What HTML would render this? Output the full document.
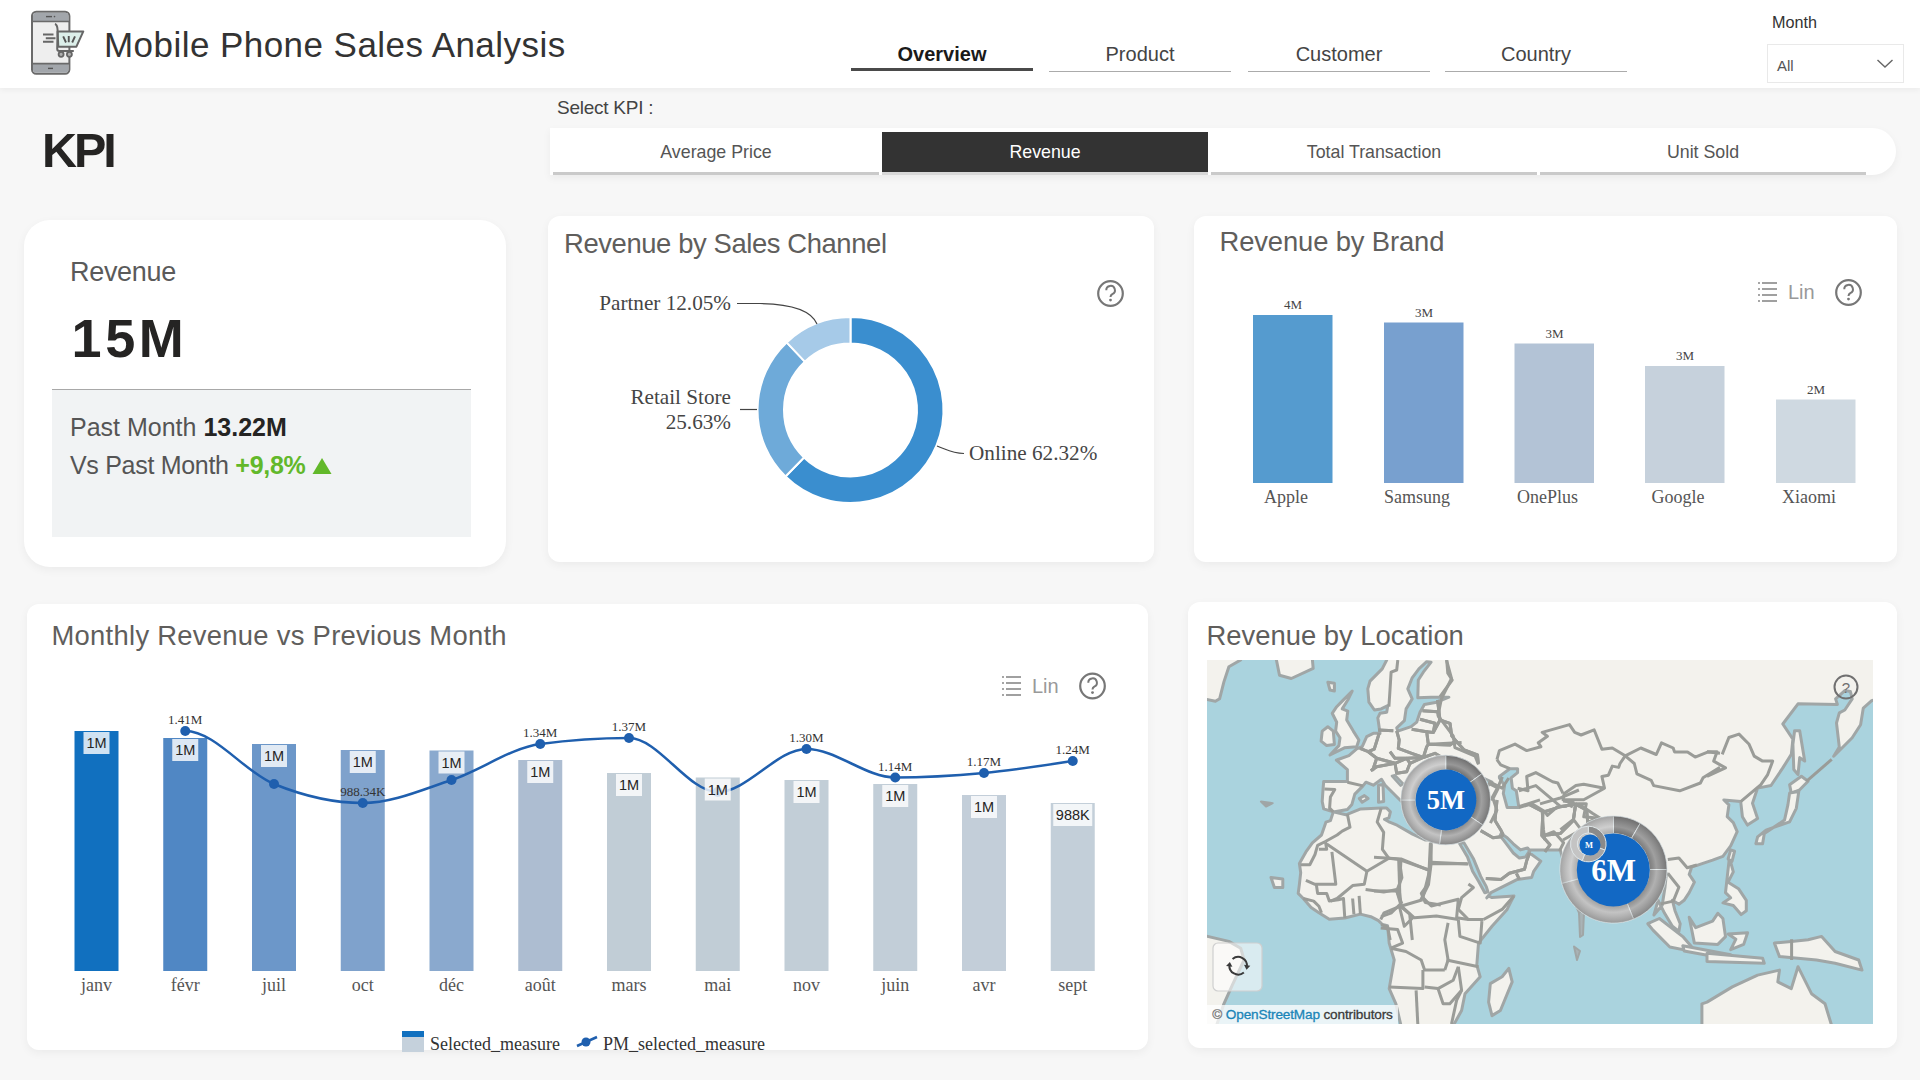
<!DOCTYPE html>
<html><head><meta charset="utf-8">
<style>
*{margin:0;padding:0;box-sizing:border-box}
html,body{width:1920px;height:1080px;overflow:hidden;background:#f7f7f7;font-family:"Liberation Sans",sans-serif;color:#333}
.abs{position:absolute}
#hdr{left:0;top:0;width:1920px;height:88px;background:#fff;box-shadow:0 2px 6px rgba(0,0,0,0.05)}
.title{left:104px;top:25px;font-size:35px;color:#333;letter-spacing:0.45px;white-space:nowrap}
.tab{top:41px;padding-top:2px;width:182px;height:30.5px;text-align:center;font-size:20px;color:#444;border-bottom:1.6px solid #ababab}
.tab.on{font-weight:bold;color:#1a1a1a;border-bottom:3px solid #4a4a4a;height:30px}
.card{background:#fff;box-shadow:0 3px 10px rgba(0,0,0,0.05)}
.ctitle{font-size:27.4px;color:#605e5c;white-space:nowrap}
.serif{font-family:"Liberation Serif",serif}
.kbtn{top:132px;width:326px;height:43px;text-align:center;font-size:17.8px;color:#555;line-height:40px;border-bottom:3px solid #cacaca}
.kbtn.on{background:#333;color:#fff;border-bottom:3px solid #d8d8d8;height:43px}
svg text{font-family:"Liberation Serif",serif}
</style></head><body>
<div id="hdr" class="abs"></div>
<svg class="abs" style="left:0;top:0" width="100" height="87" viewBox="0 0 100 87">
 <rect x="32" y="11.8" width="37.4" height="62" rx="4.2" fill="#eeeeee" stroke="#6a6a6a" stroke-width="2"/>
 <path d="M33 21.3 V16 Q33 12.8 36.2 12.8 H65.2 Q68.4 12.8 68.4 16 V21.3 Z" fill="#a2a6ab"/>
 <path d="M33 63.7 V69.6 Q33 72.8 36.2 72.8 H65.2 Q68.4 72.8 68.4 69.6 V63.7 Z" fill="#a2a6ab"/>
 <line x1="32" y1="21.5" x2="69.4" y2="21.5" stroke="#6a6a6a" stroke-width="1.6"/>
 <line x1="32" y1="63.6" x2="69.4" y2="63.6" stroke="#6a6a6a" stroke-width="1.6"/>
 <line x1="46" y1="16.6" x2="52" y2="16.6" stroke="#555" stroke-width="1.4"/><circle cx="54.5" cy="16.6" r="0.8" fill="#555"/>
 <line x1="48" y1="68.4" x2="53" y2="68.4" stroke="#555" stroke-width="1.4"/>
 <path d="M43 34.5 H53.5 M45.8 38.3 H55.5 M43 41.8 H53.5" stroke="#666" stroke-width="1.9"/>
 <path d="M57.6 31.4 L83.3 31.4 L76.4 46.7 L58.3 46.7 Z" fill="#dcefea" stroke="#666" stroke-width="2" stroke-linejoin="round"/>
 <path d="M54.9 24 Q57.3 24.5 57.6 30 L57.2 48.8 Q57.2 51 59.4 51 L73.8 51" fill="none" stroke="#666" stroke-width="2"/>
 <path d="M63.2 36.3 L66 42.5 M68.75 36 L68.75 42.2 M75 36.3 L72.2 42.5" stroke="#555" stroke-width="1.9"/>
 <circle cx="61.1" cy="54.3" r="2.5" fill="#b0b0b0" stroke="#666" stroke-width="1.8"/>
 <circle cx="69.4" cy="54.3" r="2.5" fill="#b0b0b0" stroke="#666" stroke-width="1.8"/>
</svg>
<div class="abs title">Mobile Phone Sales Analysis</div>
<div class="abs tab on" style="left:851px">Overview</div>
<div class="abs tab" style="left:1049px">Product</div>
<div class="abs tab" style="left:1248px">Customer</div>
<div class="abs tab" style="left:1445px">Country</div>
<div class="abs" style="left:1772px;top:13px;font-size:16.2px;color:#333">Month</div>
<div class="abs" style="left:1767px;top:44px;width:137px;height:39px;border:1.5px solid #e9e9e9;background:#fff"></div>
<div class="abs" style="left:1777px;top:57px;font-size:15px;color:#555">All</div>
<svg class="abs" style="left:1874px;top:55px" width="22" height="16"><path d="M3.5 5 L11 12 L18.5 5" fill="none" stroke="#666" stroke-width="1.4"/></svg>

<div class="abs" style="left:42px;top:121.5px;font-size:48.5px;font-weight:bold;color:#252423;letter-spacing:-3px">KPI</div>
<div class="abs" style="left:557px;top:97px;font-size:19px;color:#444;letter-spacing:-0.25px">Select KPI :</div>
<div class="abs" style="left:550px;top:128px;width:1346px;height:47px;background:#fff;border-radius:0 24px 24px 0;box-shadow:0 3px 8px rgba(0,0,0,0.05)"></div>
<div class="abs kbtn" style="left:553px">Average Price</div>
<div class="abs kbtn on" style="left:882px">Revenue</div>
<div class="abs kbtn" style="left:1211px">Total Transaction</div>
<div class="abs kbtn" style="left:1540px">Unit Sold</div>

<div class="abs card" style="left:24px;top:220px;width:482px;height:347px;border-radius:26px"></div>
<div class="abs" style="left:70px;top:257px;font-size:27px;color:#5a5a5a;letter-spacing:-0.3px">Revenue</div>
<div class="abs" style="left:71.5px;top:307px;font-size:54px;font-weight:bold;color:#252423;letter-spacing:3.6px">15M</div>
<div class="abs" style="left:52px;top:389px;width:419px;height:148px;background:#f1f3f4;border-top:1.5px solid #a8a8a8"></div>
<div class="abs" style="left:70px;top:413px;font-size:25px;color:#555;white-space:nowrap">Past Month <b style="color:#252423">13.22M</b></div>
<div class="abs" style="left:70px;top:451px;font-size:25px;color:#555;white-space:nowrap;letter-spacing:-0.3px">Vs Past Month <b style="color:#62b82a;letter-spacing:-0.3px">+9,8%</b> <svg width="20" height="18" style="vertical-align:-1px"><path d="M10 1 L19.5 17 L0.5 17 Z" fill="#62b82a"/></svg></div>
<div class="abs card" style="left:548px;top:216px;width:606px;height:346px;border-radius:12px"></div>
<div class="abs ctitle" style="left:564px;top:227.5px;letter-spacing:-0.39px">Revenue by Sales Channel</div>
<svg class="abs" style="left:0;top:0" width="1920" height="600" viewBox="0 0 1920 600">
<path d="M850.50 317.00 A93 93 0 1 1 785.49 476.50 L804.01 457.55 A66.5 66.5 0 1 0 850.50 343.50 Z" fill="#3a8ecf" stroke="#fff" stroke-width="2"/>
<path d="M785.49 476.50 A93 93 0 0 1 786.62 342.41 L804.83 361.67 A66.5 66.5 0 0 0 804.01 457.55 Z" fill="#6eaad9" stroke="#fff" stroke-width="2"/>
<path d="M786.62 342.41 A93 93 0 0 1 850.50 317.00 L850.50 343.50 A66.5 66.5 0 0 0 804.83 361.67 Z" fill="#a6cae8" stroke="#fff" stroke-width="2"/>
<path d="M737 303.5 L760 303.5 C795 304 812 312 817 324" fill="none" stroke="#444" stroke-width="1.2"/>
<path d="M740 409.5 L757 409.5" fill="none" stroke="#444" stroke-width="1.2"/>
<path d="M937 446 C948 450 952 453 964 453.5" fill="none" stroke="#444" stroke-width="1.2"/>
<text x="731" y="310" font-size="21.2" fill="#454545" text-anchor="end">Partner 12.05%</text>
<text x="731" y="404" font-size="21.2" fill="#454545" text-anchor="end">Retail Store</text>
<text x="731" y="429" font-size="21.2" fill="#454545" text-anchor="end">25.63%</text>
<text x="969" y="460" font-size="21.2" fill="#454545">Online 62.32%</text>
<circle cx="1110.5" cy="293.5" r="12.3" fill="none" stroke="#777" stroke-width="2.2"/><path d="M1106.3 290.3 A4.3 4.3 0 1 1 1112.3 294.1 Q1110.5 295.1 1110.5 297.1" fill="none" stroke="#777" stroke-width="2"/><circle cx="1110.5" cy="300.1" r="1.4" fill="#777"/>
</svg>
<div class="abs card" style="left:1194px;top:216px;width:703px;height:346px;border-radius:12px"></div>
<div class="abs ctitle" style="left:1219.5px;top:226px;letter-spacing:-0.13px">Revenue by Brand</div>
<svg class="abs" style="left:1180px;top:200px" width="740" height="380" viewBox="1180 200 740 380">
<rect x="1253" y="315" width="79.5" height="168" fill="#559bcf"/>
<text x="1293" y="308.5" font-size="13" fill="#444" text-anchor="middle">4M</text>
<text x="1286" y="503" font-size="18" fill="#555" text-anchor="middle">Apple</text>
<rect x="1384" y="322.5" width="79.5" height="160.5" fill="#78a0cf"/>
<text x="1424" y="316.5" font-size="13" fill="#444" text-anchor="middle">3M</text>
<text x="1417" y="503" font-size="18" fill="#555" text-anchor="middle">Samsung</text>
<rect x="1514.5" y="343.5" width="79.5" height="139.5" fill="#b3c3d6"/>
<text x="1554.5" y="337.5" font-size="13" fill="#444" text-anchor="middle">3M</text>
<text x="1547.5" y="503" font-size="18" fill="#555" text-anchor="middle">OnePlus</text>
<rect x="1645" y="366" width="79.5" height="117" fill="#c6d1dc"/>
<text x="1685" y="359.5" font-size="13" fill="#444" text-anchor="middle">3M</text>
<text x="1678" y="503" font-size="18" fill="#555" text-anchor="middle">Google</text>
<rect x="1776" y="399.5" width="79.5" height="83.5" fill="#cfd9e1"/>
<text x="1816" y="393.5" font-size="13" fill="#444" text-anchor="middle">2M</text>
<text x="1809" y="503" font-size="18" fill="#555" text-anchor="middle">Xiaomi</text>
<g stroke="#888" stroke-width="1.6">
<line x1="1758" y1="283" x2="1760" y2="283"/><line x1="1762" y1="283" x2="1777" y2="283"/>
<line x1="1758" y1="289" x2="1760" y2="289"/><line x1="1762" y1="289" x2="1777" y2="289"/>
<line x1="1758" y1="295" x2="1760" y2="295"/><line x1="1762" y1="295" x2="1777" y2="295"/>
<line x1="1758" y1="301" x2="1760" y2="301"/><line x1="1762" y1="301" x2="1777" y2="301"/>
</g>
<text x="1788" y="299" font-size="20" fill="#999" style="font-family:Liberation Sans">Lin</text>
<circle cx="1848.5" cy="292.5" r="12.3" fill="none" stroke="#777" stroke-width="2.2"/><path d="M1844.3 289.3 A4.3 4.3 0 1 1 1850.3 293.1 Q1848.5 294.1 1848.5 296.1" fill="none" stroke="#777" stroke-width="2"/><circle cx="1848.5" cy="299.1" r="1.4" fill="#777"/>
</svg>
<div class="abs card" style="left:27px;top:604px;width:1121px;height:446px;border-radius:12px"></div>
<div class="abs ctitle" style="left:51.5px;top:620px;letter-spacing:0.28px">Monthly Revenue vs Previous Month</div>
<svg class="abs" style="left:0;top:580px" width="1170" height="500" viewBox="0 580 1170 500">
<rect x="74.50" y="731" width="44" height="240" fill="#1170bf"/>
<text x="96.50" y="991" font-size="18" fill="#555" text-anchor="middle">janv</text>
<rect x="163.25" y="738" width="44" height="233" fill="#5087c4"/>
<text x="185.25" y="991" font-size="18" fill="#555" text-anchor="middle">févr</text>
<rect x="252.00" y="744" width="44" height="227" fill="#6c97c9"/>
<text x="274.00" y="991" font-size="18" fill="#555" text-anchor="middle">juil</text>
<rect x="340.75" y="750" width="44" height="221" fill="#7fa2cc"/>
<text x="362.75" y="991" font-size="18" fill="#555" text-anchor="middle">oct</text>
<rect x="429.50" y="750.5" width="44" height="220.5" fill="#8aa9ce"/>
<text x="451.50" y="991" font-size="18" fill="#555" text-anchor="middle">déc</text>
<rect x="518.25" y="760" width="44" height="211" fill="#adbdd1"/>
<text x="540.25" y="991" font-size="18" fill="#555" text-anchor="middle">août</text>
<rect x="607.00" y="773" width="44" height="198" fill="#c1cdd6"/>
<text x="629.00" y="991" font-size="18" fill="#555" text-anchor="middle">mars</text>
<rect x="695.75" y="777.5" width="44" height="193.5" fill="#c1cdd6"/>
<text x="717.75" y="991" font-size="18" fill="#555" text-anchor="middle">mai</text>
<rect x="784.50" y="780" width="44" height="191" fill="#c2ced7"/>
<text x="806.50" y="991" font-size="18" fill="#555" text-anchor="middle">nov</text>
<rect x="873.25" y="784" width="44" height="187" fill="#c2ced8"/>
<text x="895.25" y="991" font-size="18" fill="#555" text-anchor="middle">juin</text>
<rect x="962.00" y="795" width="44" height="176" fill="#c3ced9"/>
<text x="984.00" y="991" font-size="18" fill="#555" text-anchor="middle">avr</text>
<rect x="1050.75" y="803" width="44" height="168" fill="#c3cfd9"/>
<text x="1072.75" y="991" font-size="18" fill="#555" text-anchor="middle">sept</text>
<path d="M185.25 731.00 C214.83 731.00 244.42 772.00 274.00 784.00 C303.58 796.00 333.17 803.00 362.75 803.00 C392.33 803.00 421.92 789.83 451.50 780.00 C481.08 770.17 510.67 748.00 540.25 744.00 C569.83 740.00 599.42 738.00 629.00 738.00 C658.58 738.00 688.17 792.00 717.75 792.00 C747.33 792.00 776.92 749.00 806.50 749.00 C836.08 749.00 865.67 777.50 895.25 777.50 C924.83 777.50 954.42 775.75 984.00 773.00 C1013.58 770.25 1043.17 765.62 1072.75 761.00" fill="none" stroke="#1f5fae" stroke-width="2.5"/>
<circle cx="185.25" cy="731" r="5" fill="#1f5fae"/>
<circle cx="274.00" cy="784" r="5" fill="#1f5fae"/>
<circle cx="362.75" cy="803" r="5" fill="#1f5fae"/>
<circle cx="451.50" cy="780" r="5" fill="#1f5fae"/>
<circle cx="540.25" cy="744" r="5" fill="#1f5fae"/>
<circle cx="629.00" cy="738" r="5" fill="#1f5fae"/>
<circle cx="717.75" cy="792" r="5" fill="#1f5fae"/>
<circle cx="806.50" cy="749" r="5" fill="#1f5fae"/>
<circle cx="895.25" cy="777.5" r="5" fill="#1f5fae"/>
<circle cx="984.00" cy="773" r="5" fill="#1f5fae"/>
<circle cx="1072.75" cy="761" r="5" fill="#1f5fae"/>
<rect x="83.50" y="732" width="26" height="22" fill="#fff" fill-opacity="0.8"/>
<text x="96.50" y="748.2" font-size="14.5" fill="#252423" text-anchor="middle" style="font-family:Liberation Sans">1M</text>
<rect x="172.25" y="739" width="26" height="22" fill="#fff" fill-opacity="0.8"/>
<text x="185.25" y="755.2" font-size="14.5" fill="#252423" text-anchor="middle" style="font-family:Liberation Sans">1M</text>
<rect x="261.00" y="745" width="26" height="22" fill="#fff" fill-opacity="0.8"/>
<text x="274.00" y="761.2" font-size="14.5" fill="#252423" text-anchor="middle" style="font-family:Liberation Sans">1M</text>
<rect x="349.75" y="751" width="26" height="22" fill="#fff" fill-opacity="0.8"/>
<text x="362.75" y="767.2" font-size="14.5" fill="#252423" text-anchor="middle" style="font-family:Liberation Sans">1M</text>
<rect x="438.50" y="751.5" width="26" height="22" fill="#fff" fill-opacity="0.8"/>
<text x="451.50" y="767.7" font-size="14.5" fill="#252423" text-anchor="middle" style="font-family:Liberation Sans">1M</text>
<rect x="527.25" y="761" width="26" height="22" fill="#fff" fill-opacity="0.8"/>
<text x="540.25" y="777.2" font-size="14.5" fill="#252423" text-anchor="middle" style="font-family:Liberation Sans">1M</text>
<rect x="616.00" y="774" width="26" height="22" fill="#fff" fill-opacity="0.8"/>
<text x="629.00" y="790.2" font-size="14.5" fill="#252423" text-anchor="middle" style="font-family:Liberation Sans">1M</text>
<rect x="704.75" y="778.5" width="26" height="22" fill="#fff" fill-opacity="0.8"/>
<text x="717.75" y="794.7" font-size="14.5" fill="#252423" text-anchor="middle" style="font-family:Liberation Sans">1M</text>
<rect x="793.50" y="781" width="26" height="22" fill="#fff" fill-opacity="0.8"/>
<text x="806.50" y="797.2" font-size="14.5" fill="#252423" text-anchor="middle" style="font-family:Liberation Sans">1M</text>
<rect x="882.25" y="785" width="26" height="22" fill="#fff" fill-opacity="0.8"/>
<text x="895.25" y="801.2" font-size="14.5" fill="#252423" text-anchor="middle" style="font-family:Liberation Sans">1M</text>
<rect x="971.00" y="796" width="26" height="22" fill="#fff" fill-opacity="0.8"/>
<text x="984.00" y="812.2" font-size="14.5" fill="#252423" text-anchor="middle" style="font-family:Liberation Sans">1M</text>
<rect x="1053.25" y="804" width="39" height="22" fill="#fff" fill-opacity="0.8"/>
<text x="1072.75" y="820.2" font-size="14.5" fill="#252423" text-anchor="middle" style="font-family:Liberation Sans">988K</text>
<text x="185.25" y="724" font-size="13" fill="#333" text-anchor="middle">1.41M</text>
<text x="362.75" y="796" font-size="13" fill="#333" text-anchor="middle">988.34K</text>
<text x="540.25" y="737" font-size="13" fill="#333" text-anchor="middle">1.34M</text>
<text x="629.00" y="731" font-size="13" fill="#333" text-anchor="middle">1.37M</text>
<text x="806.50" y="742" font-size="13" fill="#333" text-anchor="middle">1.30M</text>
<text x="895.25" y="770.5" font-size="13" fill="#333" text-anchor="middle">1.14M</text>
<text x="984.00" y="766" font-size="13" fill="#333" text-anchor="middle">1.17M</text>
<text x="1072.75" y="754" font-size="13" fill="#333" text-anchor="middle">1.24M</text>
<g stroke="#888" stroke-width="1.6">
<line x1="1002" y1="677" x2="1004" y2="677"/><line x1="1006" y1="677" x2="1021" y2="677"/>
<line x1="1002" y1="683" x2="1004" y2="683"/><line x1="1006" y1="683" x2="1021" y2="683"/>
<line x1="1002" y1="689" x2="1004" y2="689"/><line x1="1006" y1="689" x2="1021" y2="689"/>
<line x1="1002" y1="695" x2="1004" y2="695"/><line x1="1006" y1="695" x2="1021" y2="695"/>
</g>
<text x="1032" y="693" font-size="20" fill="#999" style="font-family:Liberation Sans">Lin</text>
<circle cx="1092.5" cy="686" r="12.3" fill="none" stroke="#777" stroke-width="2.2"/><path d="M1088.3 682.8 A4.3 4.3 0 1 1 1094.3 686.6 Q1092.5 687.6 1092.5 689.6" fill="none" stroke="#777" stroke-width="2"/><circle cx="1092.5" cy="692.6" r="1.4" fill="#777"/>
<rect x="402" y="1031" width="22" height="21" fill="#c5d1dc"/><rect x="402" y="1031" width="22" height="6" fill="#1170bf"/>
<text x="430" y="1050" font-size="18" fill="#333">Selected_measure</text>
<path d="M577 1046 L597 1037" stroke="#1f5fae" stroke-width="2.5"/><circle cx="586" cy="1042" r="4.5" fill="#1f5fae"/>
<text x="603" y="1050" font-size="18" fill="#333">PM_selected_measure</text>
</svg>
<div class="abs card" style="left:1188px;top:602px;width:709px;height:446px;border-radius:12px"></div>
<div class="abs ctitle" style="left:1206.5px;top:619.5px">Revenue by Location</div>
<svg class="abs" style="left:1207px;top:660px" width="666" height="364" viewBox="1207 660 666 364">
<defs><radialGradient id="rg" cx="0.5" cy="0.5" r="0.5"><stop offset="0.68" stop-color="#000" stop-opacity="0.12"/><stop offset="0.8" stop-color="#fff" stop-opacity="0.15"/><stop offset="1" stop-color="#000" stop-opacity="0.18"/></radialGradient></defs>
<rect x="1207" y="660" width="666" height="364" fill="#aad3de"/>
<path d="M1386.7 660.0 L1382.2 668.9 L1370.0 681.1 L1367.8 688.9 L1368.9 702.2 L1374.4 710.0 L1381.1 708.9 L1387.8 705.6 L1386.7 712.2 L1380.0 713.3 L1377.8 717.8 L1380.0 733.3 L1373.3 733.3 L1366.7 736.7 L1362.2 746.7 L1356.7 748.9 L1348.9 755.6 L1336.7 760.0 L1336.3 760.0 L1347.4 769.6 L1347.4 781.5 L1323.7 781.5 L1323.0 789.6 L1322.2 801.5 L1323.7 808.9 L1333.3 811.9 L1330.4 820.7 L1325.9 822.2 L1321.5 835.0 L1312.4 842.8 L1305.9 851.9 L1299.4 863.5 L1300.7 872.6 L1299.4 884.3 L1298.2 893.4 L1303.3 898.5 L1311.1 907.6 L1318.9 912.8 L1329.3 919.3 L1344.8 918.0 L1360.4 914.1 L1370.8 916.7 L1378.5 920.6 L1382.4 924.5 L1387.6 925.8 L1389.2 943.1 L1394.2 960.0 L1389.2 988.6 L1395.9 1003.8 L1401.0 1025.7 L1453.2 1025.7 L1461.6 1010.5 L1465.0 993.7 L1480.2 976.8 L1476.8 965.0 L1478.5 943.1 L1492.0 926.3 L1507.1 909.4 L1513.9 895.9 L1492.0 897.6 L1488.6 895.9 L1486.8 897.8 L1490.9 892.7 L1517.4 879.4 L1531.7 877.4 L1533.7 871.3 L1540.8 861.1 L1529.6 853.0 L1529.6 849.9 L1560.2 849.9 L1566.0 870.0 L1574.0 900.0 L1580.0 914.0 L1595.0 912.0 L1620.0 895.0 L1660.0 868.0 L1666.4 873.3 L1665.0 887.2 L1662.2 905.3 L1653.9 915.0 L1658.1 900.3 L1664.6 913.3 L1672.4 926.3 L1678.9 931.4 L1680.2 923.7 L1675.0 910.7 L1672.4 900.3 L1678.9 904.2 L1684.1 900.3 L1689.2 892.6 L1694.4 882.2 L1689.2 874.4 L1691.8 866.7 L1697.0 865.4 L1712.6 860.2 L1722.9 856.3 L1730.7 845.9 L1737.2 831.7 L1733.3 822.6 L1727.2 816.7 L1728.9 804.9 L1723.9 799.9 L1740.7 801.6 L1742.4 816.7 L1747.4 825.1 L1757.6 818.4 L1752.5 803.2 L1757.6 788.1 L1771.0 785.5 L1782.8 767.9 L1791.3 754.4 L1792.9 739.2 L1782.8 724.0 L1798.0 703.8 L1837.4 704.4 L1835.6 698.9 L1844.8 690.6 L1850.4 691.5 L1852.2 698.9 L1844.8 710.0 L1839.3 712.8 L1836.5 723.0 L1839.3 747.0 L1833.7 756.3 L1852.2 737.8 L1860.6 724.8 L1863.3 708.1 L1871.7 700.7 L1880.0 698.0 L1880.0 650.0 L1386.7 650.0 Z" fill="#f3f2ed" stroke="#a0a6a6" stroke-width="3" stroke-linejoin="round"/>
<path d="M1333.3 811.9 L1345.9 814.8 L1360.7 808.9 L1381.5 808.1 L1386.7 808.1 L1390.4 811.9 L1388.9 817.8 L1384.4 819.3 L1389.6 822.2 L1397.0 825.2 L1412.6 834.1 L1425.0 840.0 L1440.0 840.0 L1440.0 790.0 L1401.5 801.5 L1385.2 785.2 L1381.5 779.3 L1373.3 785.2 L1365.9 782.2 L1363.0 785.9 L1354.8 794.1 L1351.9 804.4 L1347.4 809.6 Z" fill="#aad3de" stroke="#a0a6a6" stroke-width="3" stroke-linejoin="round"/>
<path d="M1440.0 778.0 L1470.0 772.0 L1492.0 782.0 L1478.0 795.0 L1450.0 793.0 Z" fill="#aad3de" stroke="#a0a6a6" stroke-width="3" stroke-linejoin="round"/>
<path d="M1391.9 775.9 L1394.8 775.2 L1403.0 783.7 L1400.7 785.6 Z" fill="#aad3de" stroke="#a0a6a6" stroke-width="2.5" stroke-linejoin="round"/>
<path d="M1396.7 727.8 L1404.4 720.6 L1406.1 708.9 L1412.2 698.9 L1407.8 688.9 L1412.2 677.8 L1418.9 668.9 L1426.7 661.7 L1431.1 662.2 L1423.3 672.2 L1418.3 680.0 L1417.8 697.8 L1431.1 697.2 L1448.9 697.2 L1436.7 702.2 L1424.4 704.4 L1420.0 712.2 L1416.7 722.2 L1411.1 726.7 L1397.8 731.1 Z" fill="#aad3de" stroke="#a0a6a6" stroke-width="3" stroke-linejoin="round"/>
<path d="M1499.4 776.5 L1509.8 768.7 L1517.6 768.7 L1517.6 772.6 L1511.1 777.8 L1512.4 788.2 L1516.3 790.8 L1518.9 807.6 L1507.2 807.6 L1503.3 793.4 L1504.6 785.6 L1499.4 777.8 Z" fill="#aad3de" stroke="#a0a6a6" stroke-width="3" stroke-linejoin="round"/>
<path d="M1501.1 833.6 L1507.2 837.7 L1513.3 843.8 L1520.5 849.9 L1527.6 847.9 L1529.6 850.9 L1525.5 857.0 L1519.4 858.1 L1513.3 853.0 L1507.2 844.8 L1500.1 835.6 Z" fill="#aad3de" stroke="#a0a6a6" stroke-width="3" stroke-linejoin="round"/>
<path d="M1459.4 843.3 L1463.9 842.8 L1473.6 859.1 L1480.7 876.4 L1486.3 886.6 L1487.9 891.7 L1484.8 892.7 L1478.7 881.5 L1472.6 871.3 L1467.5 857.0 Z" fill="#aad3de" stroke="#a0a6a6" stroke-width="3" stroke-linejoin="round"/>
<path d="M1207.0 650.0 L1240.7 650.0 L1240.7 660.0 L1228.9 666.7 L1223.9 681.9 L1219.6 698.8 L1215.4 701.3 L1200.0 698.0 Z" fill="#f3f2ed" stroke="#a0a6a6" stroke-width="3" stroke-linejoin="round"/>
<path d="M1274.4 650.0 L1311.5 650.0 L1313.2 668.4 L1291.3 678.5 L1279.5 675.2 Z" fill="#f3f2ed" stroke="#a0a6a6" stroke-width="3" stroke-linejoin="round"/>
<path d="M1327.8 682.2 L1334.4 683.3 L1334.4 691.1 L1330.0 690.0 Z" fill="#f3f2ed" stroke="#a0a6a6" stroke-width="3" stroke-linejoin="round"/>
<path d="M1352.2 691.1 L1347.8 700.0 L1342.2 708.9 L1347.8 711.1 L1346.7 720.0 L1353.3 731.1 L1358.9 740.0 L1356.7 746.7 L1344.4 747.8 L1330.0 755.0 L1338.9 745.6 L1340.0 737.8 L1335.6 731.1 L1336.7 722.2 L1332.2 713.3 L1336.7 706.7 L1342.2 701.1 Z" fill="#f3f2ed" stroke="#a0a6a6" stroke-width="3" stroke-linejoin="round"/>
<path d="M1322.2 731.1 L1327.8 726.7 L1333.3 731.1 L1334.4 744.4 L1326.7 745.6 L1321.1 741.1 Z" fill="#f3f2ed" stroke="#a0a6a6" stroke-width="3" stroke-linejoin="round"/>
<path d="M1508.8 968.4 L1512.2 981.9 L1500.4 1010.5 L1492.0 1015.6 L1488.6 1002.1 L1490.3 983.6 L1502.1 976.8 Z" fill="#f3f2ed" stroke="#a0a6a6" stroke-width="3" stroke-linejoin="round"/>
<path d="M1200.0 934.7 L1228.9 941.4 L1240.7 948.2 L1244.1 960.0 L1232.3 985.2 L1223.9 1003.8 L1215.0 1030.0 L1200.0 1030.0 Z" fill="#f3f2ed" stroke="#a0a6a6" stroke-width="3" stroke-linejoin="round"/>
<path d="M1271.0 877.4 L1282.8 879.1 L1282.8 887.5 L1274.4 887.5 Z" fill="#f3f2ed" stroke="#a0a6a6" stroke-width="3" stroke-linejoin="round"/>
<path d="M1647.8 923.7 L1659.4 918.5 L1682.8 936.6 L1691.8 947.0 L1689.2 950.9 L1669.8 947.0 L1653.0 930.1 Z" fill="#f3f2ed" stroke="#a0a6a6" stroke-width="3" stroke-linejoin="round"/>
<path d="M1682.8 945.7 L1730.7 954.8 L1733.3 960.0 L1684.1 950.9 Z" fill="#f3f2ed" stroke="#a0a6a6" stroke-width="3" stroke-linejoin="round"/>
<path d="M1707.0 953.2 L1762.6 958.3 L1764.3 963.3 L1707.0 961.6 Z" fill="#f3f2ed" stroke="#a0a6a6" stroke-width="3" stroke-linejoin="round"/>
<path d="M1689.2 917.2 L1695.7 927.6 L1712.6 921.1 L1717.8 913.3 L1722.9 918.5 L1725.5 936.6 L1717.8 944.4 L1694.4 943.1 Z" fill="#f3f2ed" stroke="#a0a6a6" stroke-width="3" stroke-linejoin="round"/>
<path d="M1729.4 857.6 L1733.3 871.8 L1728.1 882.2 L1738.5 888.7 L1746.3 900.3 L1746.3 910.7 L1741.1 914.6 L1733.3 905.5 L1722.9 902.9 L1730.7 897.8 L1725.5 892.6 Z" fill="#f3f2ed" stroke="#a0a6a6" stroke-width="3" stroke-linejoin="round"/>
<path d="M1730.7 849.8 L1734.6 851.1 L1732.0 861.5 L1728.1 858.9 Z" fill="#f3f2ed" stroke="#a0a6a6" stroke-width="3" stroke-linejoin="round"/>
<path d="M1728.1 934.0 L1747.6 932.7 L1743.7 944.4 L1730.7 949.6 L1735.9 939.2 Z" fill="#f3f2ed" stroke="#a0a6a6" stroke-width="3" stroke-linejoin="round"/>
<path d="M1808.1 939.7 L1821.6 936.4 L1835.1 951.5 L1858.7 960.0 L1862.0 970.1 L1835.1 963.3 L1816.5 960.0 L1798.0 958.3 L1779.5 956.6 L1774.4 943.1 L1791.3 941.4 Z" fill="#f3f2ed" stroke="#a0a6a6" stroke-width="3" stroke-linejoin="round"/>
<path d="M1701.9 1003.8 L1707.0 1002.1 L1732.3 986.9 L1757.6 975.1 L1779.5 970.1 L1777.8 981.9 L1791.3 988.6 L1798.0 966.7 L1811.5 993.7 L1825.0 1003.8 L1831.7 1025.7 L1701.9 1025.7 Z" fill="#f3f2ed" stroke="#a0a6a6" stroke-width="3" stroke-linejoin="round"/>
<path d="M1789.6 784.7 L1801.4 776.3 L1808.1 781.3 L1799.7 789.8 L1791.3 793.1 Z" fill="#f3f2ed" stroke="#a0a6a6" stroke-width="3" stroke-linejoin="round"/>
<path d="M1798.8 791.4 L1796.3 808.3 L1789.6 821.8 L1766.0 830.2 L1757.6 836.9 L1755.9 843.7 L1762.6 843.7 L1764.3 833.6 L1784.5 820.1 L1787.9 804.9 L1789.6 793.1 Z" fill="#f3f2ed" stroke="#a0a6a6" stroke-width="3" stroke-linejoin="round"/>
<path d="M1794.6 730.8 L1799.7 730.8 L1804.7 761.1 L1799.7 757.7 L1798.0 774.6 L1793.8 769.5 L1792.9 744.3 Z" fill="#f3f2ed" stroke="#a0a6a6" stroke-width="3" stroke-linejoin="round"/>
<path d="M1378.5 785.2 L1383.0 784.4 L1383.7 801.5 L1378.5 802.2 Z" fill="#f3f2ed" stroke="#a0a6a6" stroke-width="3" stroke-linejoin="round"/>
<path d="M1359.3 798.5 L1364.4 795.6 L1368.1 798.5 L1362.2 802.2 Z" fill="#f3f2ed" stroke="#a0a6a6" stroke-width="3" stroke-linejoin="round"/>
<path d="M1806.4 781.3 L1831.7 759.4" fill="none" stroke="#9a9c98" stroke-width="3" stroke-linejoin="round"/>
<path d="M1260.9 801.6 L1272.7 803.2 L1266.0 806.6 Z" fill="#9fa5a7" stroke="#a0a6a6" stroke-width="2" stroke-linejoin="round"/>
<path d="M1579.0 912.0 L1584.0 912.0 L1583.0 935.0 L1580.0 937.0 Z" fill="#a9b3b6" stroke="#a0a6a6" stroke-width="2" stroke-linejoin="round"/>
<path d="M1574.0 946.5 L1580.0 951.0 L1577.0 960.0 Z" fill="#a9b3b6" stroke="#a0a6a6" stroke-width="2" stroke-linejoin="round"/>
<path d="M1397.8 660.0 L1396.7 670.0 L1391.1 672.2 L1390.0 690.0 L1388.9 706.7" fill="none" stroke="#9a9c98" stroke-width="3" stroke-linejoin="round"/>
<path d="M1446.7 660.0 L1447.8 673.3 L1452.2 680.0 L1440.0 696.7" fill="none" stroke="#9a9c98" stroke-width="3" stroke-linejoin="round"/>
<path d="M1347.4 782.2 L1363.0 785.9" fill="none" stroke="#9a9c98" stroke-width="3" stroke-linejoin="round"/>
<path d="M1324.4 788.9 L1334.8 789.6 L1330.4 797.0 L1329.6 808.1 L1333.3 811.9" fill="none" stroke="#9a9c98" stroke-width="3" stroke-linejoin="round"/>
<path d="M1431.1 844.3 L1431.1 863.7 L1467.4 863.7" fill="none" stroke="#9a9c98" stroke-width="3" stroke-linejoin="round"/>
<path d="M1431.1 863.7 L1428.5 884.5 L1420.8 900.0" fill="none" stroke="#9a9c98" stroke-width="3" stroke-linejoin="round"/>
<path d="M1398.7 859.8 L1400.0 900.0" fill="none" stroke="#9a9c98" stroke-width="3" stroke-linejoin="round"/>
<path d="M1374.0 857.2 L1401.0 858.9 L1429.6 870.6 L1431.3 842.0" fill="none" stroke="#9a9c98" stroke-width="3" stroke-linejoin="round"/>
<path d="M1431.3 862.2 L1468.4 863.9" fill="none" stroke="#9a9c98" stroke-width="3" stroke-linejoin="round"/>
<path d="M1401.0 858.9 L1399.3 890.9 L1374.0 890.9" fill="none" stroke="#9a9c98" stroke-width="3" stroke-linejoin="round"/>
<path d="M1429.6 870.6 L1422.9 897.6 L1431.3 906.0 L1458.3 899.3 L1456.6 917.8 L1468.4 919.5" fill="none" stroke="#9a9c98" stroke-width="3" stroke-linejoin="round"/>
<path d="M1399.3 890.9 L1401.0 906.0 L1384.1 912.8 L1380.7 919.5" fill="none" stroke="#9a9c98" stroke-width="3" stroke-linejoin="round"/>
<path d="M1401.0 906.0 L1414.4 917.8 L1436.4 916.1 L1458.3 919.5" fill="none" stroke="#9a9c98" stroke-width="3" stroke-linejoin="round"/>
<path d="M1468.4 884.1 L1473.4 887.5 L1461.6 897.6 L1458.3 909.4 L1468.4 919.5 L1483.5 919.5" fill="none" stroke="#9a9c98" stroke-width="3" stroke-linejoin="round"/>
<path d="M1483.5 919.5 L1502.1 909.4 L1513.9 895.9" fill="none" stroke="#9a9c98" stroke-width="3" stroke-linejoin="round"/>
<path d="M1481.9 921.2 L1480.2 943.1 L1459.9 936.4 L1458.3 919.5" fill="none" stroke="#9a9c98" stroke-width="3" stroke-linejoin="round"/>
<path d="M1448.1 922.9 L1444.8 939.7 L1448.1 960.0 L1444.8 970.1" fill="none" stroke="#9a9c98" stroke-width="3" stroke-linejoin="round"/>
<path d="M1446.5 960.0 L1478.5 966.7" fill="none" stroke="#9a9c98" stroke-width="3" stroke-linejoin="round"/>
<path d="M1390.9 948.2 L1406.0 951.5 L1421.2 960.0 L1424.6 970.1 L1444.8 970.1" fill="none" stroke="#9a9c98" stroke-width="3" stroke-linejoin="round"/>
<path d="M1422.9 970.1 L1422.9 988.6 L1389.2 986.9" fill="none" stroke="#9a9c98" stroke-width="3" stroke-linejoin="round"/>
<path d="M1424.6 986.9 L1438.0 988.6 L1453.2 980.2 L1458.3 966.7" fill="none" stroke="#9a9c98" stroke-width="3" stroke-linejoin="round"/>
<path d="M1458.3 966.7 L1461.6 990.3 L1456.6 1000.4 L1451.5 1024.0" fill="none" stroke="#9a9c98" stroke-width="3" stroke-linejoin="round"/>
<path d="M1416.1 990.3 L1417.8 1024.0" fill="none" stroke="#9a9c98" stroke-width="3" stroke-linejoin="round"/>
<path d="M1438.0 988.6 L1443.1 1003.8 L1449.8 1003.8 L1461.6 990.3" fill="none" stroke="#9a9c98" stroke-width="3" stroke-linejoin="round"/>
<path d="M1380.7 927.9 L1397.6 929.6 L1402.6 943.1 L1390.9 948.2" fill="none" stroke="#9a9c98" stroke-width="3" stroke-linejoin="round"/>
<path d="M1399.3 906.0 L1404.3 926.3 L1412.8 917.8" fill="none" stroke="#9a9c98" stroke-width="3" stroke-linejoin="round"/>
<path d="M1347.4 814.3 L1350.0 827.2 L1342.2 831.1 L1337.1 835.0 L1325.4 841.5" fill="none" stroke="#9a9c98" stroke-width="3" stroke-linejoin="round"/>
<path d="M1325.4 841.5 L1317.6 845.4 L1315.0 854.5 L1309.8 864.8 L1300.7 864.8" fill="none" stroke="#9a9c98" stroke-width="3" stroke-linejoin="round"/>
<path d="M1325.4 841.5 L1326.7 849.3 L1318.9 849.3" fill="none" stroke="#9a9c98" stroke-width="3" stroke-linejoin="round"/>
<path d="M1326.7 844.1 L1366.9 871.3 L1388.9 858.3 L1399.3 859.6 L1429.1 870.0 L1430.4 842.8" fill="none" stroke="#9a9c98" stroke-width="3" stroke-linejoin="round"/>
<path d="M1331.9 851.9 L1335.8 884.3 L1315.0 884.3 L1305.9 880.4" fill="none" stroke="#9a9c98" stroke-width="3" stroke-linejoin="round"/>
<path d="M1381.1 808.4 L1377.2 822.0 L1383.7 832.4 L1382.4 849.3 L1388.9 858.3" fill="none" stroke="#9a9c98" stroke-width="3" stroke-linejoin="round"/>
<path d="M1399.3 859.6 L1401.9 877.8 L1396.7 890.8 L1401.9 903.7" fill="none" stroke="#9a9c98" stroke-width="3" stroke-linejoin="round"/>
<path d="M1366.9 871.3 L1364.3 884.3 L1352.6 885.6 L1337.1 898.5 L1330.6 901.1" fill="none" stroke="#9a9c98" stroke-width="3" stroke-linejoin="round"/>
<path d="M1365.6 889.5 L1383.7 892.1 L1396.7 889.5" fill="none" stroke="#9a9c98" stroke-width="3" stroke-linejoin="round"/>
<path d="M1396.7 890.8 L1400.6 903.7 L1391.5 912.8 L1381.1 916.7" fill="none" stroke="#9a9c98" stroke-width="3" stroke-linejoin="round"/>
<path d="M1429.1 870.0 L1427.8 884.3 L1421.3 893.4 L1425.2 902.4 L1440.8 905.0" fill="none" stroke="#9a9c98" stroke-width="3" stroke-linejoin="round"/>
<path d="M1400.6 906.3 L1422.6 899.8" fill="none" stroke="#9a9c98" stroke-width="3" stroke-linejoin="round"/>
<path d="M1316.3 884.3 L1317.6 893.4 L1326.7 893.4 L1329.3 901.1 L1338.3 899.8 L1343.5 898.5 L1344.8 918.0" fill="none" stroke="#9a9c98" stroke-width="3" stroke-linejoin="round"/>
<path d="M1352.6 898.5 L1353.9 914.1" fill="none" stroke="#9a9c98" stroke-width="3" stroke-linejoin="round"/>
<path d="M1359.1 895.9 L1360.4 914.1" fill="none" stroke="#9a9c98" stroke-width="3" stroke-linejoin="round"/>
<path d="M1303.3 898.5 L1313.7 901.1 L1318.9 906.3 L1321.5 912.8" fill="none" stroke="#9a9c98" stroke-width="3" stroke-linejoin="round"/>
<path d="M1381.1 924.5 L1387.6 927.1 L1390.2 940.0" fill="none" stroke="#9a9c98" stroke-width="3" stroke-linejoin="round"/>
<path d="M1400.6 906.3 L1409.7 914.1 L1412.3 940.0" fill="none" stroke="#9a9c98" stroke-width="3" stroke-linejoin="round"/>
<path d="M1396.7 730.8 L1399.2 740.0 L1398.3 748.3 L1411.7 753.3 L1423.3 757.5" fill="none" stroke="#9a9c98" stroke-width="3" stroke-linejoin="round"/>
<path d="M1423.3 757.5 L1426.7 746.7 L1428.3 744.2 L1426.7 731.7 L1411.7 729.2" fill="none" stroke="#9a9c98" stroke-width="3" stroke-linejoin="round"/>
<path d="M1420.0 719.2 L1435.0 723.3 L1433.3 732.5 L1426.7 731.7" fill="none" stroke="#9a9c98" stroke-width="3" stroke-linejoin="round"/>
<path d="M1422.5 710.8 L1437.5 711.7 L1440.0 720.0" fill="none" stroke="#9a9c98" stroke-width="3" stroke-linejoin="round"/>
<path d="M1433.3 732.5 L1440.0 720.0 L1450.0 723.3 L1451.7 735.8 L1455.8 740.8 L1450.0 745.0 L1428.3 744.2" fill="none" stroke="#9a9c98" stroke-width="3" stroke-linejoin="round"/>
<path d="M1455.8 740.8 L1464.2 750.0 L1477.5 755.0 L1478.3 763.3" fill="none" stroke="#9a9c98" stroke-width="3" stroke-linejoin="round"/>
<path d="M1437.5 700.0 L1440.0 720.0" fill="none" stroke="#9a9c98" stroke-width="3" stroke-linejoin="round"/>
<path d="M1379.2 733.3 L1374.2 749.2 L1368.3 751.7" fill="none" stroke="#9a9c98" stroke-width="3" stroke-linejoin="round"/>
<path d="M1360.0 748.3 L1368.3 751.7 L1376.7 758.3 L1372.5 770.8" fill="none" stroke="#9a9c98" stroke-width="3" stroke-linejoin="round"/>
<path d="M1376.7 758.3 L1395.0 763.3 L1406.7 758.3 L1423.3 757.5" fill="none" stroke="#9a9c98" stroke-width="3" stroke-linejoin="round"/>
<path d="M1370.8 770.8 L1376.7 766.7 L1395.0 763.3" fill="none" stroke="#9a9c98" stroke-width="3" stroke-linejoin="round"/>
<path d="M1406.7 758.3 L1410.0 763.3 L1423.3 757.5" fill="none" stroke="#9a9c98" stroke-width="3" stroke-linejoin="round"/>
<path d="M1395.0 763.3 L1396.7 773.3 L1406.7 771.7 L1410.0 763.3" fill="none" stroke="#9a9c98" stroke-width="3" stroke-linejoin="round"/>
<path d="M1378.3 730.0 L1393.3 730.8" fill="none" stroke="#9a9c98" stroke-width="3" stroke-linejoin="round"/>
<path d="M1390.0 751.7 L1395.0 758.3 L1406.7 758.3" fill="none" stroke="#9a9c98" stroke-width="3" stroke-linejoin="round"/>
<path d="M1423.3 757.5 L1435.0 753.3 L1443.3 758.3" fill="none" stroke="#9a9c98" stroke-width="3" stroke-linejoin="round"/>
<path d="M1485.8 878.4 L1501.1 879.4 L1509.3 873.3 L1524.5 869.3 L1526.6 861.1 L1529.6 853.0" fill="none" stroke="#9a9c98" stroke-width="3" stroke-linejoin="round"/>
<path d="M1516.4 873.3 L1519.4 879.4" fill="none" stroke="#9a9c98" stroke-width="3" stroke-linejoin="round"/>
<path d="M1480.7 830.6 L1493.0 837.7 L1501.1 836.7 L1503.1 834.6" fill="none" stroke="#9a9c98" stroke-width="3" stroke-linejoin="round"/>
<path d="M1497.0 800.0 L1495.0 820.4 L1501.1 830.6 L1503.1 834.6" fill="none" stroke="#9a9c98" stroke-width="3" stroke-linejoin="round"/>
<path d="M1542.9 812.2 L1541.8 835.6 L1550.0 844.8 L1544.9 851.9" fill="none" stroke="#9a9c98" stroke-width="3" stroke-linejoin="round"/>
<path d="M1542.9 812.2 L1559.2 807.1 L1575.5 804.1 L1573.4 820.4 L1560.2 833.6 L1542.9 835.6" fill="none" stroke="#9a9c98" stroke-width="3" stroke-linejoin="round"/>
<path d="M1528.6 804.1 L1543.9 812.2" fill="none" stroke="#9a9c98" stroke-width="3" stroke-linejoin="round"/>
<path d="M1575.5 804.1 L1586.7 810.2 L1587.7 822.4 L1597.9 818.3" fill="none" stroke="#9a9c98" stroke-width="3" stroke-linejoin="round"/>
<path d="M1496.9 759.6 L1499.4 750.6 L1515.0 744.1 L1526.7 750.6 L1540.9 746.7 L1538.3 742.8 L1547.4 736.3 L1542.2 732.4 L1569.5 724.6 L1574.7 732.4 L1581.1 735.0 L1594.1 729.8 L1601.9 749.3 L1612.3 748.0 L1625.2 755.8" fill="none" stroke="#9a9c98" stroke-width="3" stroke-linejoin="round"/>
<path d="M1625.2 755.8 L1640.8 748.0 L1656.3 754.5 L1661.5 742.8 L1673.2 748.0 L1674.5 751.9 L1687.5 751.9 L1695.2 757.1 L1708.2 751.9 L1720.0 753.2" fill="none" stroke="#9a9c98" stroke-width="3" stroke-linejoin="round"/>
<path d="M1625.2 755.8 L1634.3 763.5 L1636.9 773.9 L1651.2 780.4 L1653.7 785.6 L1679.7 790.8 L1700.4 783.0 L1703.0 777.8 L1720.0 767.4" fill="none" stroke="#9a9c98" stroke-width="3" stroke-linejoin="round"/>
<path d="M1625.2 755.8 L1620.0 763.5 L1618.7 767.4 L1612.3 766.1 L1608.4 775.2 L1601.9 776.5 L1604.5 788.2 L1583.7 784.3 L1575.9 785.6 L1564.3 793.4 L1563.0 799.8 L1583.7 799.8 L1604.5 788.2" fill="none" stroke="#9a9c98" stroke-width="3" stroke-linejoin="round"/>
<path d="M1396.7 730.8 L1399.2 740.0 L1398.3 748.3 L1411.7 753.3 L1423.3 757.5" fill="none" stroke="#9a9c98" stroke-width="3" stroke-linejoin="round"/>
<path d="M1423.3 757.5 L1426.7 746.7 L1428.3 744.2 L1426.7 731.7 L1411.7 729.2" fill="none" stroke="#9a9c98" stroke-width="3" stroke-linejoin="round"/>
<path d="M1420.0 719.2 L1435.0 723.3 L1433.3 732.5 L1426.7 731.7" fill="none" stroke="#9a9c98" stroke-width="3" stroke-linejoin="round"/>
<path d="M1422.5 710.8 L1437.5 711.7 L1440.0 720.0" fill="none" stroke="#9a9c98" stroke-width="3" stroke-linejoin="round"/>
<path d="M1433.3 732.5 L1440.0 720.0 L1450.0 723.3 L1451.7 735.8 L1455.8 740.8 L1450.0 745.0 L1428.3 744.2" fill="none" stroke="#9a9c98" stroke-width="3" stroke-linejoin="round"/>
<path d="M1455.8 740.8 L1464.2 750.0 L1477.5 755.0 L1478.3 763.3" fill="none" stroke="#9a9c98" stroke-width="3" stroke-linejoin="round"/>
<path d="M1437.5 700.0 L1440.0 720.0" fill="none" stroke="#9a9c98" stroke-width="3" stroke-linejoin="round"/>
<path d="M1379.2 733.3 L1374.2 749.2 L1368.3 751.7" fill="none" stroke="#9a9c98" stroke-width="3" stroke-linejoin="round"/>
<path d="M1360.0 748.3 L1368.3 751.7 L1376.7 758.3 L1372.5 770.8" fill="none" stroke="#9a9c98" stroke-width="3" stroke-linejoin="round"/>
<path d="M1376.7 758.3 L1395.0 763.3 L1406.7 758.3 L1423.3 757.5" fill="none" stroke="#9a9c98" stroke-width="3" stroke-linejoin="round"/>
<path d="M1370.8 770.8 L1376.7 766.7 L1395.0 763.3" fill="none" stroke="#9a9c98" stroke-width="3" stroke-linejoin="round"/>
<path d="M1406.7 758.3 L1410.0 763.3 L1423.3 757.5" fill="none" stroke="#9a9c98" stroke-width="3" stroke-linejoin="round"/>
<path d="M1395.0 763.3 L1396.7 773.3 L1406.7 771.7 L1410.0 763.3" fill="none" stroke="#9a9c98" stroke-width="3" stroke-linejoin="round"/>
<path d="M1378.3 730.0 L1393.3 730.8" fill="none" stroke="#9a9c98" stroke-width="3" stroke-linejoin="round"/>
<path d="M1390.0 751.7 L1395.0 758.3 L1406.7 758.3" fill="none" stroke="#9a9c98" stroke-width="3" stroke-linejoin="round"/>
<path d="M1423.3 757.5 L1435.0 753.3 L1443.3 758.3" fill="none" stroke="#9a9c98" stroke-width="3" stroke-linejoin="round"/>
<path d="M1485.8 878.4 L1501.1 879.4 L1509.3 873.3 L1524.5 869.3 L1526.6 861.1 L1529.6 853.0" fill="none" stroke="#9a9c98" stroke-width="3" stroke-linejoin="round"/>
<path d="M1516.4 873.3 L1519.4 879.4" fill="none" stroke="#9a9c98" stroke-width="3" stroke-linejoin="round"/>
<path d="M1480.7 830.6 L1493.0 837.7 L1501.1 836.7 L1503.1 834.6" fill="none" stroke="#9a9c98" stroke-width="3" stroke-linejoin="round"/>
<path d="M1497.0 800.0 L1495.0 820.4 L1501.1 830.6 L1503.1 834.6" fill="none" stroke="#9a9c98" stroke-width="3" stroke-linejoin="round"/>
<path d="M1542.9 812.2 L1541.8 835.6 L1550.0 844.8 L1544.9 851.9" fill="none" stroke="#9a9c98" stroke-width="3" stroke-linejoin="round"/>
<path d="M1542.9 812.2 L1559.2 807.1 L1575.5 804.1 L1573.4 820.4 L1560.2 833.6 L1542.9 835.6" fill="none" stroke="#9a9c98" stroke-width="3" stroke-linejoin="round"/>
<path d="M1528.6 804.1 L1543.9 812.2" fill="none" stroke="#9a9c98" stroke-width="3" stroke-linejoin="round"/>
<path d="M1575.5 804.1 L1586.7 810.2 L1587.7 822.4 L1597.9 818.3" fill="none" stroke="#9a9c98" stroke-width="3" stroke-linejoin="round"/>
<path d="M1496.9 759.6 L1500.7 764.8 L1509.8 768.7" fill="none" stroke="#9a9c98" stroke-width="3" stroke-linejoin="round"/>
<path d="M1517.6 788.2 L1528.0 790.8 L1526.7 776.5 L1535.8 772.6 L1552.6 781.7 L1557.8 783.0 L1563.0 793.4" fill="none" stroke="#9a9c98" stroke-width="3" stroke-linejoin="round"/>
<path d="M1518.9 790.8 L1535.8 785.6 L1560.4 806.3 L1565.6 806.3 L1570.8 803.7" fill="none" stroke="#9a9c98" stroke-width="3" stroke-linejoin="round"/>
<path d="M1518.9 807.6 L1531.9 803.7 L1544.8 811.5 L1547.4 815.4 L1557.8 806.3" fill="none" stroke="#9a9c98" stroke-width="3" stroke-linejoin="round"/>
<path d="M1542.2 811.5 L1543.5 829.7 L1544.8 840.0" fill="none" stroke="#9a9c98" stroke-width="3" stroke-linejoin="round"/>
<path d="M1560.4 829.7 L1573.4 819.3 L1575.9 803.7" fill="none" stroke="#9a9c98" stroke-width="3" stroke-linejoin="round"/>
<path d="M1575.9 803.7 L1586.3 803.7 L1583.7 816.7 L1596.7 818.0" fill="none" stroke="#9a9c98" stroke-width="3" stroke-linejoin="round"/>
<path d="M1563.0 801.1 L1573.4 802.4 L1570.8 807.6" fill="none" stroke="#9a9c98" stroke-width="3" stroke-linejoin="round"/>
<path d="M1573.4 819.3 L1581.1 829.7 L1563.0 840.0" fill="none" stroke="#9a9c98" stroke-width="3" stroke-linejoin="round"/>
<path d="M1490.8 800.2 L1498.5 785.9 L1502.4 776.9" fill="none" stroke="#9a9c98" stroke-width="3" stroke-linejoin="round"/>
<path d="M1487.8 783.0 L1498.2 788.2 L1493.0 798.5 L1496.9 810.2 L1490.4 823.2" fill="none" stroke="#9a9c98" stroke-width="3" stroke-linejoin="round"/>
<path d="M1446.5 660.0 L1451.5 678.5 L1441.4 698.8 L1438.0 715.6 L1453.2 735.8 L1454.9 747.6 L1475.1 756.1 L1478.5 764.5" fill="none" stroke="#9a9c98" stroke-width="3" stroke-linejoin="round"/>
<path d="M1429.6 744.3 L1461.6 742.6" fill="none" stroke="#9a9c98" stroke-width="3" stroke-linejoin="round"/>
<path d="M1488.6 781.3 L1502.1 788.1 L1508.8 778.0" fill="none" stroke="#9a9c98" stroke-width="3" stroke-linejoin="round"/>
<path d="M1518.9 806.6 L1540.0 799.9" fill="none" stroke="#9a9c98" stroke-width="3" stroke-linejoin="round"/>
<path d="M1707.0 751.8 L1717.1 751.8 L1713.7 761.1 L1725.5 767.9 L1707.0 776.3" fill="none" stroke="#9a9c98" stroke-width="3" stroke-linejoin="round"/>
<path d="M1722.2 754.4 L1728.9 737.5 L1739.0 734.1 L1749.1 744.3 L1754.2 756.1 L1762.6 761.1 L1772.7 761.1 L1767.7 774.6 L1760.9 784.7 L1740.7 801.6" fill="none" stroke="#9a9c98" stroke-width="3" stroke-linejoin="round"/>
<path d="M1540.0 803.9 L1559.4 798.3 L1578.9 790.0" fill="none" stroke="#9a9c98" stroke-width="3" stroke-linejoin="round"/>
<path d="M1578.9 803.9 L1592.8 813.6 L1603.9 820.6" fill="none" stroke="#9a9c98" stroke-width="3" stroke-linejoin="round"/>
<path d="M1559.4 851.1 L1563.6 842.8 L1553.9 831.7 L1542.8 835.8" fill="none" stroke="#9a9c98" stroke-width="3" stroke-linejoin="round"/>
<path d="M1667.8 859.4 L1678.9 858.1 L1687.2 867.8 L1696.9 865.0" fill="none" stroke="#9a9c98" stroke-width="3" stroke-linejoin="round"/>
<path d="M1667.8 873.3 L1678.9 887.2 L1673.3 901.1 L1660.8 903.9" fill="none" stroke="#9a9c98" stroke-width="3" stroke-linejoin="round"/>
<path d="M1791.6 939.2 L1791.6 960.0" fill="none" stroke="#9a9c98" stroke-width="3" stroke-linejoin="round"/>
<path d="M1445.70 755.20 A44.8 44.8 0 0 1 1481.94 773.67 L1469.97 782.37 A30 30 0 0 0 1445.70 770.00 Z" fill="#858585" stroke="#dfe6e8" stroke-width="1"/>
<path d="M1481.94 773.67 A44.8 44.8 0 0 1 1482.84 825.05 L1470.57 816.78 A30 30 0 0 0 1469.97 782.37 Z" fill="#8f8f8f" stroke="#dfe6e8" stroke-width="1"/>
<path d="M1482.84 825.05 A44.8 44.8 0 0 1 1439.47 844.36 L1441.52 829.71 A30 30 0 0 0 1470.57 816.78 Z" fill="#a3a3a3" stroke="#dfe6e8" stroke-width="1"/>
<path d="M1439.47 844.36 A44.8 44.8 0 0 1 1400.90 800.00 L1415.70 800.00 A30 30 0 0 0 1441.52 829.71 Z" fill="#b9b9b9" stroke="#dfe6e8" stroke-width="1"/>
<path d="M1400.90 800.00 A44.8 44.8 0 0 1 1445.70 755.20 L1445.70 770.00 A30 30 0 0 0 1415.70 800.00 Z" fill="#c6c6c6" stroke="#dfe6e8" stroke-width="1"/>
<circle cx="1445.7" cy="800" r="44.8" fill="url(#rg)"/>
<circle cx="1446" cy="800" r="30.4" fill="#1268c4"/>
<text x="1446" y="809" font-size="26.5" font-weight="bold" fill="#fff" text-anchor="middle">5M</text>
<path d="M1613.50 816.00 A53.5 53.5 0 0 1 1640.25 823.17 L1631.50 838.32 A36 36 0 0 0 1613.50 833.50 Z" fill="#858585" stroke="#dfe6e8" stroke-width="1"/>
<path d="M1640.25 823.17 A53.5 53.5 0 0 1 1667.00 869.50 L1649.50 869.50 A36 36 0 0 0 1631.50 838.32 Z" fill="#8f8f8f" stroke="#dfe6e8" stroke-width="1"/>
<path d="M1667.00 869.50 A53.5 53.5 0 0 1 1633.54 919.10 L1626.99 902.88 A36 36 0 0 0 1649.50 869.50 Z" fill="#a3a3a3" stroke="#dfe6e8" stroke-width="1"/>
<path d="M1633.54 919.10 A53.5 53.5 0 0 1 1561.82 883.35 L1578.73 878.82 A36 36 0 0 0 1626.99 902.88 Z" fill="#b9b9b9" stroke="#dfe6e8" stroke-width="1"/>
<path d="M1561.82 883.35 A53.5 53.5 0 0 1 1613.50 816.00 L1613.50 833.50 A36 36 0 0 0 1578.73 878.82 Z" fill="#c6c6c6" stroke="#dfe6e8" stroke-width="1"/>
<circle cx="1613.5" cy="869.5" r="53.5" fill="url(#rg)"/>
<circle cx="1613.3" cy="870" r="36.5" fill="#1268c4"/>
<path d="M1588.30 826.20 A17.8 17.8 0 0 1 1605.03 850.09 L1598.64 847.76 A11 11 0 0 0 1588.30 833.00 Z" fill="#8a8a8a" stroke="#dfe6e8" stroke-width="1"/>
<path d="M1605.03 850.09 A17.8 17.8 0 0 1 1582.21 860.73 L1584.54 854.34 A11 11 0 0 0 1598.64 847.76 Z" fill="#a5a5a5" stroke="#dfe6e8" stroke-width="1"/>
<path d="M1582.21 860.73 A17.8 17.8 0 0 1 1588.30 826.20 L1588.30 833.00 A11 11 0 0 0 1584.54 854.34 Z" fill="#c4c4c4" stroke="#dfe6e8" stroke-width="1"/>
<circle cx="1590" cy="845" r="10.5" fill="#1268c4"/>
<text x="1589" y="848" font-size="8.5" font-weight="bold" fill="#fff" text-anchor="middle">M</text>
<text x="1613.6" y="881" font-size="31" font-weight="bold" fill="#fff" text-anchor="middle">6M</text>
<circle cx="1846" cy="687" r="11.5" fill="none" stroke="#707070" stroke-width="2"/>
<text x="1846" y="693" font-size="15" fill="#707070" text-anchor="middle" style="font-family:Liberation Sans">?</text>
<rect x="1213" y="943" width="49" height="48" rx="5" fill="#fff" fill-opacity="0.55" stroke="#cfcfcf" stroke-width="1.2"/>
<path d="M1232.54 959.06 A8.8 8.8 0 0 1 1246.91 967.02" fill="none" stroke="#3a3a3a" stroke-width="2"/><path d="M1246.54 969.70 L1250.33 965.69 L1244.00 964.80 Z" fill="#3a3a3a"/><path d="M1243.86 972.54 A8.8 8.8 0 0 1 1229.49 964.58" fill="none" stroke="#3a3a3a" stroke-width="2"/><path d="M1229.86 961.90 L1226.07 965.91 L1232.40 966.80 Z" fill="#3a3a3a"/>
<rect x="1207" y="1005" width="191" height="19" fill="#fff" fill-opacity="0.75"/>
<text x="1212.3" y="1018.5" font-size="13.6" fill="#3a3a3a" stroke="#3a3a3a" stroke-width="0.3" letter-spacing="-0.15" style="font-family:Liberation Sans"><tspan fill="#777" stroke="#777">©</tspan> <tspan fill="#1a85b8" stroke="#1a85b8">OpenStreetMap</tspan> contributors</text>
</svg>
</body></html>
